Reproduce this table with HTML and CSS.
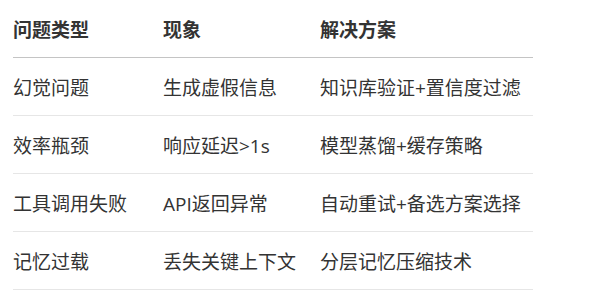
FILE: index.html
```html
<!DOCTYPE html>
<html lang="zh">
<head>
<meta charset="utf-8">
<link rel="stylesheet" href="styles.css">
</head>
<body>
<table class="issues">
  <colgroup>
    <col class="c1"><col class="c2"><col class="c3">
  </colgroup>
  <thead>
    <tr><th>问题类型</th><th>现象</th><th>解决方案</th></tr>
  </thead>
  <tbody>
    <tr><td>幻觉问题</td><td>生成虚假信息</td><td>知识库验证+置信度过滤</td></tr>
    <tr><td>效率瓶颈</td><td>响应延迟&gt;1s</td><td>模型蒸馏+缓存策略</td></tr>
    <tr><td>工具调用失败</td><td>API返回异常</td><td>自动重试+备选方案选择</td></tr>
    <tr><td>记忆过载</td><td>丢失关键上下文</td><td>分层记忆压缩技术</td></tr>
  </tbody>
</table>
</body>
</html>
```

FILE: styles.css
```css
html, body {
  margin: 0;
  padding: 0;
  background: #ffffff;
}
body {
  padding-left: 13px;
  font-family: "Open Sans", "Noto Sans CJK SC", sans-serif;
  color: #333333;
}
.issues {
  border-collapse: collapse;
  table-layout: fixed;
  width: 520px;
  font-size: 19px;
}
.c1 { width: 150px; }
.c2 { width: 157px; }
.c3 { width: 213px; }
.issues th,
.issues td {
  padding: 0;
  text-align: left;
  vertical-align: middle;
  white-space: nowrap;
}
.issues th {
  height: 57px;
  font-weight: 700;
  border-bottom: 1px solid #c4c4c4;
}
.issues td {
  height: 57px;
  font-weight: 400;
  border-bottom: 1px solid #e6e6e6;
}
```
